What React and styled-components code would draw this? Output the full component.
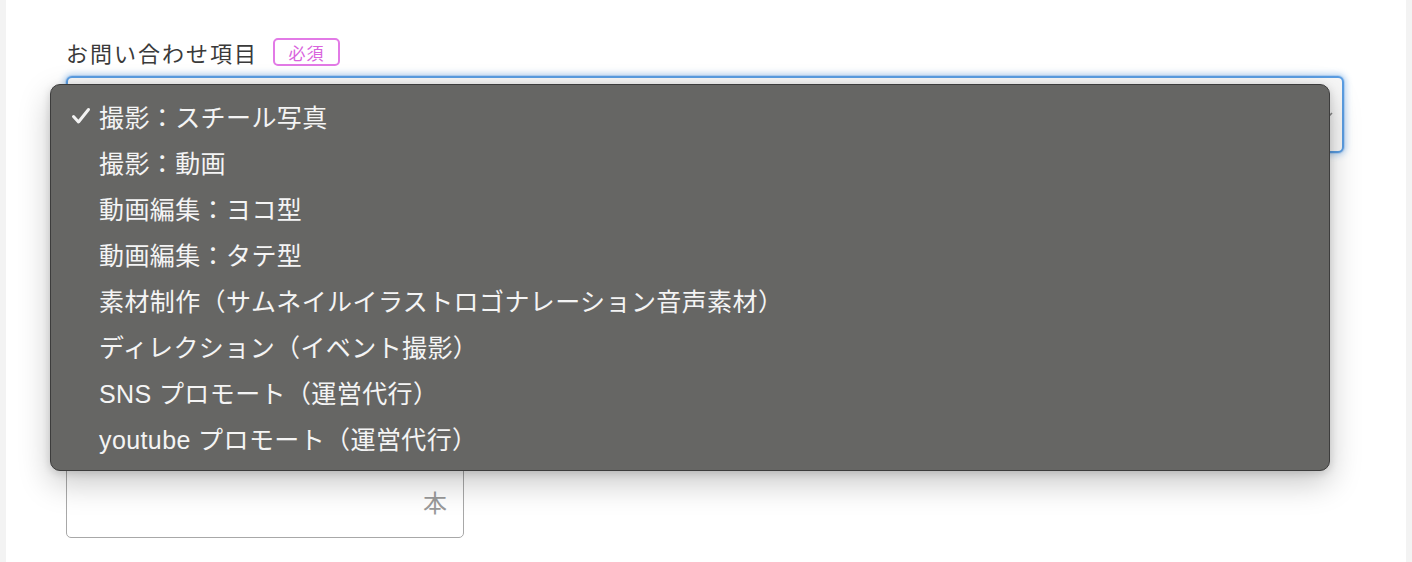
import React from "react";
import styled, { createGlobalStyle } from "styled-components";

const Global = createGlobalStyle`
  html, body { margin: 0; padding: 0; background: #f3f3f3; }
  body { font-family: "Liberation Sans", "Noto Sans CJK JP", sans-serif; }
`;

const Page = styled.div`
  height: 562px;
  overflow: hidden;
  background: #f3f3f3;
  padding: 0 6px;
`;

const Card = styled.div`
  background: #ffffff;
  height: 562px;
  box-sizing: border-box;
  padding: 38px 62px 0 60px;
`;

const LabelRow = styled.div`
  display: flex;
  align-items: center;
  gap: 15px;
  height: 28px;
  margin-bottom: 10px;
`;

const Label = styled.span`
  font-family: "Noto Sans CJK JP", sans-serif;
  font-size: 22px;
  letter-spacing: 2px;
  color: #3a3a3a;
`;

const Badge = styled.span`
  display: inline-flex;
  align-items: center;
  justify-content: center;
  box-sizing: border-box;
  width: 67px;
  height: 28px;
  border: 2px solid #e27ae6;
  border-radius: 5px;
  color: #d964dd;
  font-family: "Noto Sans CJK JP", sans-serif;
  font-size: 17px;
  letter-spacing: 1px;
`;

const SelectWrap = styled.div`
  position: relative;
`;

const SelectBox = styled.div`
  box-sizing: border-box;
  height: 77px;
  border: 2px solid #5a9de2;
  border-radius: 6px;
  background: #f7f7f7;
  box-shadow: 0 0 0 1px rgba(90, 157, 226, 0.25), 0 0 6px 2px rgba(90, 157, 226, 0.45);
  display: flex;
  align-items: center;
  justify-content: flex-end;
  padding-right: 8px;
`;

const Menu = styled.ul`
  position: absolute;
  top: 8px;
  left: -16px;
  right: 14px;
  margin: 0;
  padding: 8px 0 9px;
  list-style: none;
  background: #666664;
  border: 1px solid #3c3c3c;
  border-radius: 10px;
  box-shadow: 0 12px 32px rgba(0, 0, 0, 0.22), 0 2px 8px rgba(0, 0, 0, 0.15);
  z-index: 2;
`;

const Item = styled.li`
  display: flex;
  align-items: center;
  height: 46px;
  padding-left: 48px;
  position: relative;
  color: #f4f4f4;
  font-family: "Liberation Sans", "Noto Sans CJK JP", sans-serif;
  font-size: 25px;
  letter-spacing: 0.4px;
  white-space: nowrap;
`;

const Check = styled.span`
  position: absolute;
  left: 20px;
  top: 50%;
  transform: translateY(-50%);
  display: flex;
`;

const NextField = styled.div`
  margin-top: 312px;
  width: 398px;
`;

const InputBox = styled.div`
  box-sizing: border-box;
  height: 73px;
  border: 1.5px solid #a8a8a8;
  border-radius: 5px;
  display: flex;
  align-items: center;
  justify-content: flex-end;
  padding: 0 16px 0 0;
`;

const Suffix = styled.span`
  font-family: "Noto Sans CJK JP", sans-serif;
  font-size: 24px;
  color: #9a9a9a;
`;

const options = [
  "撮影：スチール写真",
  "撮影：動画",
  "動画編集：ヨコ型",
  "動画編集：タテ型",
  "素材制作（サムネイルイラストロゴナレーション音声素材）",
  "ディレクション（イベント撮影）",
  "SNS プロモート（運営代行）",
  "youtube プロモート（運営代行）",
];

export default function App() {
  return (
    <>
      <Global />
      <Page>
        <Card>
          <LabelRow>
            <Label>お問い合わせ項目</Label>
            <Badge>必須</Badge>
          </LabelRow>
          <SelectWrap>
            <SelectBox>
              <svg width="12" height="10" viewBox="0 0 12 10">
                <path d="M2 3 L6 7 L10 3" fill="none" stroke="#8a8a8a" strokeWidth="1.6" />
              </svg>
            </SelectBox>
            <Menu>
              {options.map((o, i) => (
                <Item key={o}>
                  {i === 0 && (
                    <Check>
                      <svg width="20" height="18" viewBox="0 0 20 18">
                        <path d="M2.5 9.5 L7.5 15 L17.5 2.5" fill="none" stroke="#f2f2f2" strokeWidth="3" strokeLinecap="round" strokeLinejoin="round" />
                      </svg>
                    </Check>
                  )}
                  {o}
                </Item>
              ))}
            </Menu>
          </SelectWrap>
          <NextField>
            <InputBox>
              <Suffix>本</Suffix>
            </InputBox>
          </NextField>
        </Card>
      </Page>
    </>
  );
}
